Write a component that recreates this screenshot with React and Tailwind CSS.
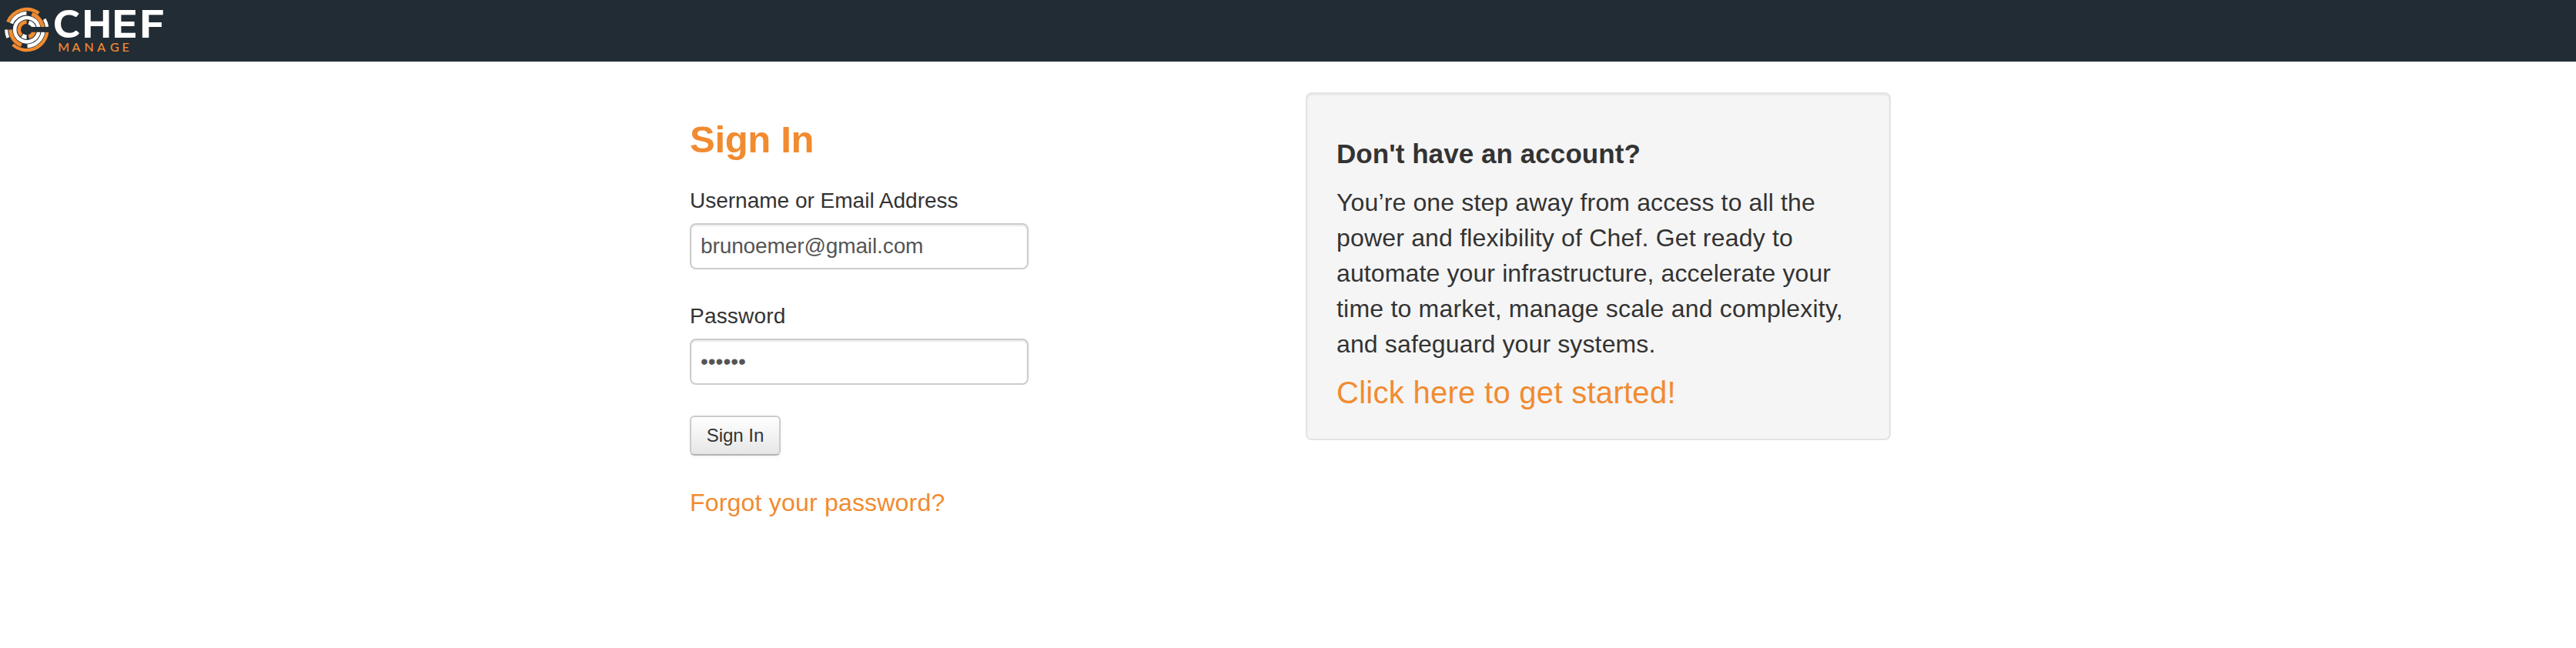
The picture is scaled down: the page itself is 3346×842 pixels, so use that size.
const ORANGE = "#f18b30";
const WHITE = "#ffffff";

// Ring segments of the logo mark: [outer radius, inner radius, start deg, end deg, colour],
// angles measured counter-clockwise from the right.
const SEGMENTS = [
  [86, 73, 54, 158, ORANGE],
  [86, 74, 8, 31, WHITE],
  [86, 74, 180, 203, WHITE],
  [86, 73, 227, 353, ORANGE],
  [71, 58, 91, 158, WHITE],
  [71, 56, 8, 72, ORANGE],
  [71, 56, 180, 251, ORANGE],
  [71, 57, 272, 353, WHITE],
  [54, 40, 8, 352, WHITE],
  [37, 23, 91, 226, ORANGE],
  [37, 21, 14, 75, WHITE],
  [37, 21, 232, 269, WHITE],
  [37, 21, 285, 350, ORANGE],
];

function arc([ro, ri, a, b]) {
  const r = (ro + ri) / 2;
  const p = (deg) => {
    const t = (deg * Math.PI) / 180;
    return `${(r * Math.cos(t)).toFixed(2)} ${(-r * Math.sin(t)).toFixed(2)}`;
  };
  return `M${p(a)}A${r} ${r} 0 ${b - a > 180 ? 1 : 0} 0 ${p(b)}`;
}

function Logo() {
  return (
    <svg width="230" height="80" viewBox="0 0 230 80" className="block" role="img" aria-label="Chef Manage">
      <g transform="translate(34.8 38.6) scale(0.3333)" fill="none">
        {SEGMENTS.map((s, i) => (
          <path key={i} d={arc(s)} stroke={s[4]} strokeWidth={s[0] - s[1]} />
        ))}
        <rect x="15" y="-11" width="74" height="20.5" fill="#222c35" />
      </g>
      <g fill="#ffffff">
        <text transform="translate(69.2 49.4) scale(1.04 1)" className="font-[Lato,sans-serif] text-[50px] font-black">C</text>
        <g className="font-[Inter,sans-serif] text-[50px] font-bold">
          <text transform="translate(106.8 49.4) scale(1.02 1)">H</text>
          <text transform="translate(145.4 49.4) scale(1.1 1)">E</text>
          <text transform="translate(181.2 49.4) scale(1.12 1)">F</text>
        </g>
      </g>
      <text
        x="75.2 93.6 109.6 126.3 143 158.6"
        y="67.2"
        fill={ORANGE}
        stroke={ORANGE}
        strokeWidth="0.2"
        className="font-[Lato,sans-serif] text-[16px]"
      >
        MANAGE
      </text>
    </svg>
  );
}

const fieldClass =
  "block h-[60px] w-[440px] rounded-lg border-2 border-[#cccccc] bg-white px-3 text-[28px] text-[#555555] shadow-[inset_0_2px_2px_rgba(0,0,0,0.075)] outline-none";

export default function App() {
  return (
    <div className="min-h-[842px] w-full bg-white font-['Liberation_Sans',Arial,sans-serif] text-[#333333]">
      <header className="h-20 bg-[#222c35]">
        <Logo />
      </header>
      <main className="mx-auto box-content flex w-[1560px] items-start justify-between pt-10 pl-1.5">
        <form className="flex flex-col items-start pt-[21px]" onSubmit={(e) => e.preventDefault()}>
          <h1 className="text-[49px] leading-[80px] font-bold tracking-[-0.3px] text-[#f18b30]">Sign In</h1>
          <label htmlFor="user" className="mt-5 text-[28px] leading-10">Username or Email Address</label>
          <input id="user" type="text" defaultValue="brunoemer@gmail.com" className={`${fieldClass} mt-[9px] tracking-[-0.11px]`} />
          <label htmlFor="pass" className="mt-[41px] text-[28px] leading-10 tracking-[0.2px]">Password</label>
          <input id="pass" type="password" defaultValue="secret" className={`${fieldClass} mt-[9px]`} />
          <button
            type="submit"
            className="mt-10 h-[52px] w-[118px] rounded-md border-2 border-[#cccccc] border-b-[#b3b3b3] bg-linear-to-b from-white to-[#e6e6e6] text-[24px] shadow-[0_2px_4px_rgba(0,0,0,0.05)]"
          >
            Sign In
          </button>
          <a href="#" className="mt-[41px] text-[32px] leading-10 tracking-[0.2px] text-[#f18b30]">Forgot your password?</a>
        </form>
        <aside className="h-[452px] w-[760px] rounded-lg border-2 border-[#e3e3e3] bg-[#f5f5f5] px-[38px] pt-[58px] shadow-[inset_0_2px_2px_rgba(0,0,0,0.05)]">
          <h2 className="text-[35px] leading-10 font-bold tracking-[0.07px]">Don't have an account?</h2>
          <p className="mt-5 flex flex-col text-[32px] leading-[46px] whitespace-nowrap">
            <span className="tracking-[0.137px]">You’re one step away from access to all the</span>
            <span className="tracking-[0.18px]">power and flexibility of Chef. Get ready to</span>
            <span className="tracking-[0.12px]">automate your infrastructure, accelerate your</span>
            <span className="tracking-[0.21px]">time to market, manage scale and complexity,</span>
            <span className="tracking-[0.135px]">and safeguard your systems.</span>
          </p>
          <a href="#" className="mt-2.5 block text-[40px] leading-[60px] tracking-[0.28px] text-[#f18b30]">Click here to get started!</a>
        </aside>
      </main>
    </div>
  );
}
